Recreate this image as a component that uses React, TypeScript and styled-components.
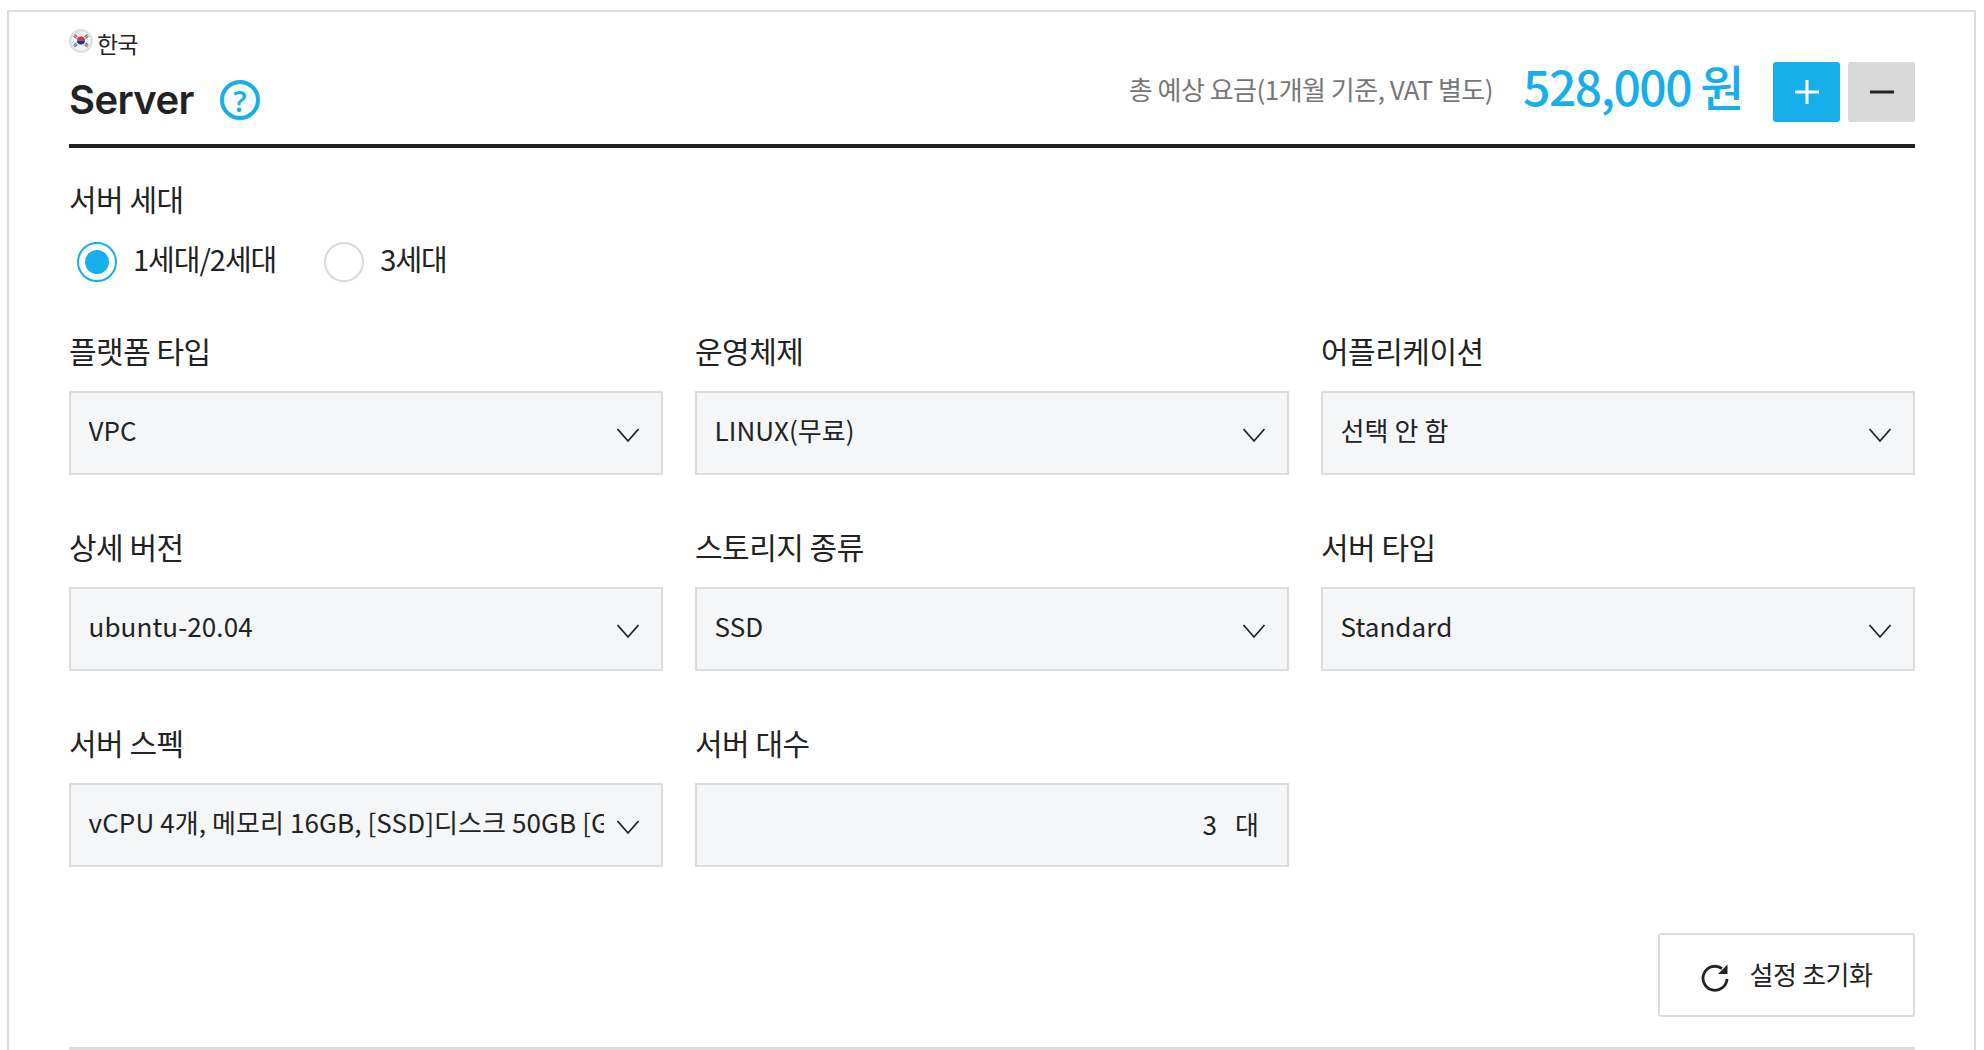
import React from 'react';
import styled, { createGlobalStyle } from 'styled-components';

const Global = createGlobalStyle`
  html, body {
    margin: 0;
    padding: 0;
    height: 1050px;
    overflow: hidden;
    background: #fff;
  }
  body {
    font-family: "Noto Sans CJK KR", "Noto Sans", sans-serif;
    color: #222;
  }
`;

const Panel = styled.div`
  box-sizing: border-box;
  margin: 10px 8px 0 7px;
  height: 1100px;
  padding: 16px 59px 0 60px;
  border: 2px solid #dcdcdc;
`;

const Region = styled.div`
  display: flex;
  align-items: center;
  gap: 4px;
  height: 30px;
  font-size: 23px;
  letter-spacing: -1px;
`;

const Flag = styled.svg`
  width: 24px;
  height: 24px;
  margin-top: -4px;
  flex: none;
`;

const Header = styled.header`
  display: flex;
  justify-content: space-between;
  height: 86px;
  border-bottom: 4px solid #222;
`;

const TitleRow = styled.div`
  display: flex;
  align-items: center;
  gap: 26px;
  height: 84px;
`;

const Title = styled.h2`
  margin: 0;
  font-family: "Inter", "Noto Sans", sans-serif;
  font-size: 40px;
  font-weight: 600;
  line-height: 48px;
  letter-spacing: -0.6px;
`;

const HelpMark = styled.span`
  box-sizing: border-box;
  display: flex;
  align-items: center;
  justify-content: center;
  width: 40px;
  height: 40px;
  border: 4px solid #16aeeb;
  border-radius: 50%;
  color: #16aeeb;
  font-family: "Noto Sans", sans-serif;
  font-size: 29px;
  font-weight: 600;
  line-height: 1;
`;

const Summary = styled.div`
  display: flex;
  align-items: center;
  height: 60px;
  margin-top: 4px;
`;

const SummaryLabel = styled.span`
  font-size: 26px;
  letter-spacing: -0.5px;
  color: #777;
  margin-right: 30px;
  padding-bottom: 8px;
`;

const Price = styled.strong`
  font-size: 48px;
  font-weight: 500;
  letter-spacing: -1.5px;
  color: #16aeeb;
  margin-right: 30px;
  padding-bottom: 15px;
`;

const SquareButton = styled.button<{ $primary?: boolean }>`
  display: flex;
  align-items: center;
  justify-content: center;
  width: 67px;
  height: 60px;
  padding: 0;
  border: 0;
  border-radius: 3px;
  margin-left: ${p => (p.$primary ? 0 : '8px')};
  background: ${p => (p.$primary ? '#16aeeb' : '#d9d9d9')};
  color: ${p => (p.$primary ? '#fff' : '#222')};
`;

const FieldLabel = styled.div`
  height: 40px;
  font-size: 30px;
  line-height: 37px;
  letter-spacing: -0.5px;
  color: #222;
`;

const Generation = styled.section`
  margin-top: 32px;
`;

const RadioRow = styled.div`
  display: flex;
  margin: 22px 0 0 8px;
  gap: 48px;
`;

const RadioItem = styled.label`
  display: flex;
  align-items: center;
  gap: 16px;
  font-size: 29px;
  letter-spacing: -1px;
  line-height: 30px;
`;

const RadioText = styled.span`
  padding-bottom: 9px;
`;

const RadioMark = styled.span<{ $on?: boolean }>`
  box-sizing: border-box;
  display: flex;
  align-items: center;
  justify-content: center;
  width: 40px;
  height: 40px;
  border-radius: 50%;
  border: 2px solid ${p => (p.$on ? '#16aeeb' : '#d9d9d9')};
  &::after {
    content: '';
    display: ${p => (p.$on ? 'block' : 'none')};
    width: 24px;
    height: 24px;
    border-radius: 50%;
    background: #16aeeb;
  }
`;

const FieldGrid = styled.div`
  display: grid;
  grid-template-columns: repeat(3, 594px);
  column-gap: 32px;
  row-gap: 53px;
  margin-top: 50px;
`;

const Box = styled.div`
  box-sizing: border-box;
  position: relative;
  display: flex;
  align-items: center;
  height: 84px;
  margin-top: 19px;
  padding: 0 57px 7px 17.5px;
  border: 2px solid #dcdcdc;
  background: #f5f6f8;
  font-size: 26px;
  letter-spacing: 0.1px;
  color: #222;
`;

const BoxText = styled.span`
  display: block;
  overflow: hidden;
  white-space: pre;
`;

const Chevron = styled.svg`
  position: absolute;
  right: 21px;
  top: 34px;
  width: 24px;
  height: 16px;
`;

const CountBox = styled(Box)`
  justify-content: flex-end;
  padding: 0 28px 3px 0;
  gap: 18px;
`;

const Footer = styled.div`
  display: flex;
  justify-content: flex-end;
  margin-top: 66px;
  padding-bottom: 30px;
  border-bottom: 3px solid #dcdcdc;
`;

const ResetButton = styled.button`
  box-sizing: border-box;
  display: flex;
  align-items: center;
  justify-content: center;
  gap: 19px;
  width: 257px;
  height: 84px;
  padding: 0 0 4px;
  border: 2px solid #dcdcdc;
  border-radius: 3px;
  background: #fff;
  font-family: inherit;
  font-size: 26px;
  letter-spacing: -0.4px;
  color: #222;

  svg {
    margin-top: 10px;
  }
`;

const fields = [
  { label: '플랫폼 타입', value: 'VPC' },
  { label: '운영체제', value: 'LINUX(무료)' },
  { label: '어플리케이션', value: '선택 안 함' },
  { label: '상세 버전', value: 'ubuntu-20.04' },
  { label: '스토리지 종류', value: 'SSD' },
  { label: '서버 타입', value: 'Standard' },
  { label: '서버 스펙', value: 'vCPU 4개, 메모리 16GB, [SSD]디스크 50GB [GEN2]' },
];

const KoreaFlag = () => (
  <Flag viewBox="0 0 24 24">
    <defs>
      <filter id="soft" x="-10%" y="-10%" width="120%" height="120%">
        <feGaussianBlur stdDeviation="0.7" />
      </filter>
    </defs>
    <circle cx="12" cy="12" r="12" fill="#dfdfdf" />
    <circle cx="12" cy="12" r="9.5" fill="#f4f4f4" filter="url(#soft)" />
    <g filter="url(#soft)">
      <path d="M8 11.5a4 4 0 0 1 8 0z" fill="#d5314a" />
      <path d="M8 11.5a4 4 0 0 0 8 0z" fill="#27347e" />
      <path
        d="M4.5 7l3 2.5M5.5 5.5l3 2.5M15.5 8l3-2.5M16.5 9.5l3-2.5M4.5 16.5l3-2.5M5.5 18l3-2.5M15.5 15.5l3 2.5M16.5 14l3 2.5"
        stroke="#777"
        strokeWidth="1.3"
      />
    </g>
  </Flag>
);

const ChevronDown = () => (
  <Chevron viewBox="0 0 24 16" fill="none" stroke="#222" strokeWidth="1.8">
    <path d="M1.5 2l10.5 12L22.5 2" />
  </Chevron>
);

export default function App() {
  return (
    <>
      <Global />
      <Panel>
        <Region>
          <KoreaFlag />
          한국
        </Region>
        <Header>
          <TitleRow>
            <Title>Server</Title>
            <HelpMark>?</HelpMark>
          </TitleRow>
          <Summary>
            <SummaryLabel>총 예상 요금(1개월 기준, VAT 별도)</SummaryLabel>
            <Price>528,000 원</Price>
            <SquareButton $primary>
              <svg width="26" height="26" viewBox="0 0 26 26" stroke="#fff" strokeWidth="3">
                <path d="M13 1v24M1 13h24" />
              </svg>
            </SquareButton>
            <SquareButton>
              <svg width="26" height="26" viewBox="0 0 26 26" stroke="#222" strokeWidth="3">
                <path d="M1 13h24" />
              </svg>
            </SquareButton>
          </Summary>
        </Header>

        <Generation>
          <FieldLabel>서버 세대</FieldLabel>
          <RadioRow>
            <RadioItem>
              <RadioMark $on />
              <RadioText>1세대/2세대</RadioText>
            </RadioItem>
            <RadioItem>
              <RadioMark />
              <RadioText>3세대</RadioText>
            </RadioItem>
          </RadioRow>
        </Generation>

        <FieldGrid>
          {fields.map(f => (
            <div key={f.label}>
              <FieldLabel>{f.label}</FieldLabel>
              <Box>
                <BoxText>{f.value}</BoxText>
                <ChevronDown />
              </Box>
            </div>
          ))}
          <div>
            <FieldLabel>서버 대수</FieldLabel>
            <CountBox>
              <span>3</span>
              <span>대</span>
            </CountBox>
          </div>
        </FieldGrid>

        <Footer>
          <ResetButton>
            <svg width="30" height="30" viewBox="0 0 30 30" fill="none" stroke="#222" strokeWidth="2.8">
              <path d="M27 16A12 12 0 1 1 22 5.5" />
              <path d="M27.5 1.5v9.5h-9.5z" fill="#222" stroke="none" />
            </svg>
            설정 초기화
          </ResetButton>
        </Footer>
      </Panel>
    </>
  );
}
